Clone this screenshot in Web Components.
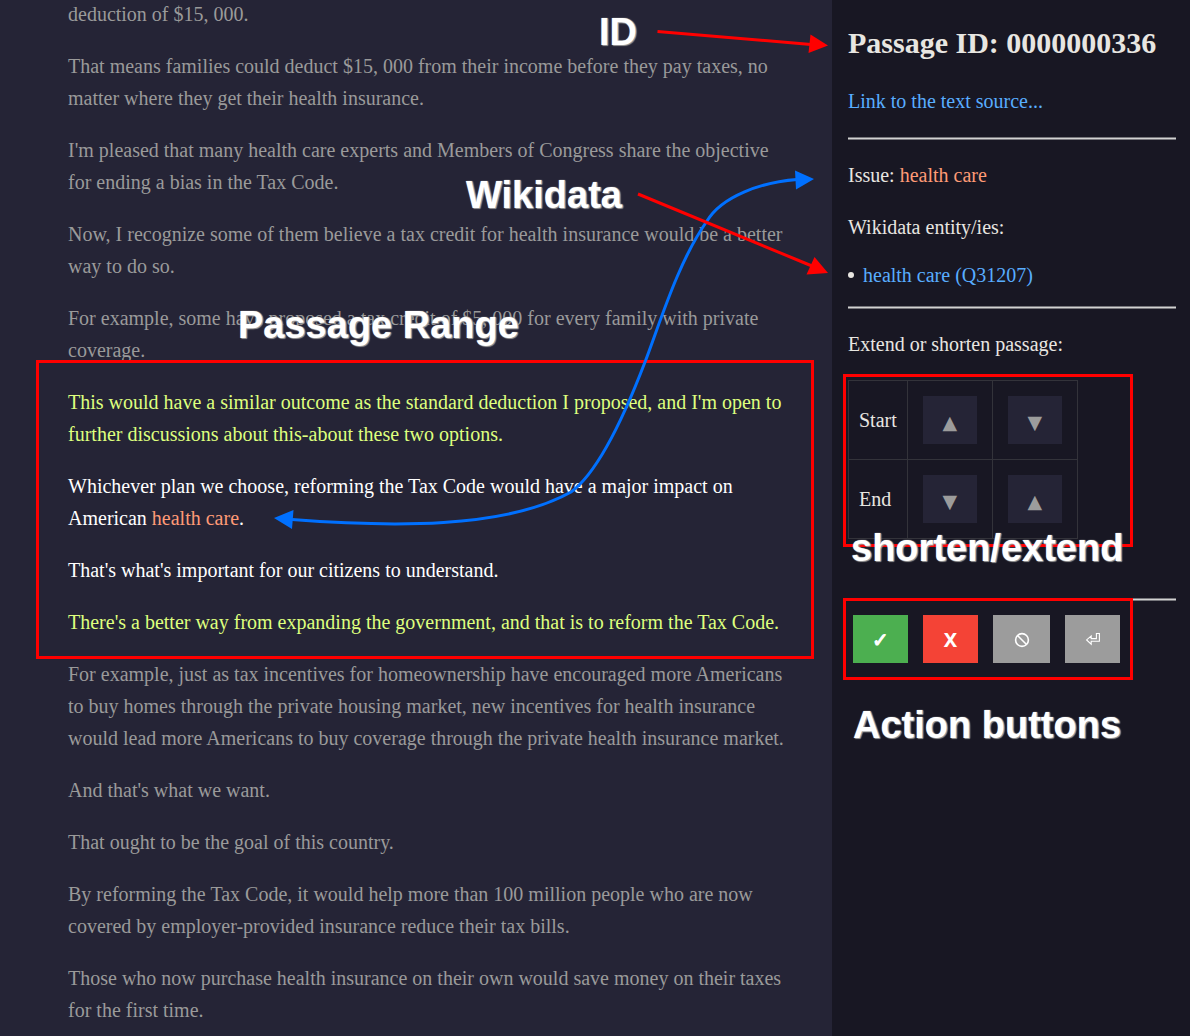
<!DOCTYPE html>
<html lang="en">
<head>
<meta charset="utf-8">
<meta name="viewport" content="width=device-width, initial-scale=1">
<title>Passage ID: 0000000336</title>
<style>
  body { margin: 0; background: #252436; }
</style>
</head>
<body>
<passage-app></passage-app>

<template id="passage-app">
  <style>
    :host { display: flex; position: relative; min-height: 100vh; overflow: hidden;
      font: 20px/32px "Liberation Serif", "Times New Roman", serif; color: #9a9a9a; background: #252436; }
    speech-text { flex: 1; min-width: 0; }
    side-panel { flex: 0 0 358px; }
    mark { background: none; color: #ff9b76; }
  </style>
  <speech-text>
    <speech-line>deduction of $15, 000.</speech-line>
    <speech-line>That means families could deduct $15, 000 from their income before they pay taxes, no matter where they get their health insurance.</speech-line>
    <speech-line>I'm pleased that many health care experts and Members of Congress share the objective for ending a bias in the Tax Code.</speech-line>
    <speech-line>Now, I recognize some of them believe a tax credit for health insurance would be a better way to do so.</speech-line>
    <speech-line>For example, some have proposed a tax credit of $5, 000 for every family with private coverage.</speech-line>
    <passage-range>
      <speech-line kind="context">This would have a similar outcome as the standard deduction I proposed, and I'm open to further discussions about this-about these two options.</speech-line>
      <speech-line kind="core">Whichever plan we choose, reforming the Tax Code would have a major impact on American <mark>health care</mark>.</speech-line>
      <speech-line kind="core">That's what's important for our citizens to understand.</speech-line>
      <speech-line kind="context">There's a better way from expanding the government, and that is to reform the Tax Code.</speech-line>
    </passage-range>
    <speech-line>For example, just as tax incentives for homeownership have encouraged more Americans to buy homes through the private housing market, new incentives for health insurance would lead more Americans to buy coverage through the private health insurance market.</speech-line>
    <speech-line>And that's what we want.</speech-line>
    <speech-line>That ought to be the goal of this country.</speech-line>
    <speech-line>By reforming the Tax Code, it would help more than 100 million people who are now covered by employer-provided insurance reduce their tax bills.</speech-line>
    <speech-line>Those who now purchase health insurance on their own would save money on their taxes for the first time.</speech-line>
  </speech-text>
  <side-panel></side-panel>
  <callout-layer></callout-layer>
</template>

<template id="speech-text">
  <style>
    :host { display: block; }
    main { display: flex; flex-direction: column; gap: 20px; margin-top: -2px; padding: 0 44px 10px 68px; }
  </style>
  <main><slot></slot></main>
</template>

<template id="speech-line">
  <style>
    :host { display: block; }
    :host([kind="context"]) { color: #deff7e; }
    :host([kind="core"]) { color: #fff; }
    p { margin: 0; }
  </style>
  <p><slot></slot></p>
</template>

<template id="passage-range">
  <style>
    :host { display: flex; flex-direction: column; gap: 20px; position: relative; }
    :host::before { content: ""; position: absolute; inset: -26px -26px -21px -32px; border: 3px solid #f00; }
  </style>
  <slot></slot>
</template>

<template id="side-panel">
  <style>
    :host { display: block; background: #181723; color: #e8e6e1; }
    aside { padding: 25px 14px 25px 16px; }
    h1 { font-size: 30px; line-height: 36px; margin: 0 0 24px; white-space: nowrap; }
    p { margin: 0 0 20px; }
    a { color: #58adff; text-decoration: none; }
    em { font-style: normal; color: #ff9b76; }
    hr { height: 1px; margin: 20px 0 19px; border: solid #77777c; border-width: 1px 0; background: #d2d2d2; }
    ul { margin: -4px 0 0; padding: 0; list-style: none; }
    li { display: flex; align-items: center; gap: 9px; }
    li::before { content: ""; width: 6px; height: 6px; border-radius: 50%; background: #e8e6e1; }
    ul + hr { margin-top: 15px; }
    .tools { margin-top: 59px; }
  </style>
  <aside>
    <h1>Passage ID: 0000000336</h1>
    <p><a href="#source">Link to the text source...</a></p>
    <hr>
    <p>Issue: <em>health care</em></p>
    <p>Wikidata entity/ies:</p>
    <ul><li><a href="#Q31207">health care (Q31207)</a></li></ul>
    <hr>
    <p>Extend or shorten passage:</p>
    <range-controls></range-controls>
    <hr class="tools">
    <action-bar></action-bar>
  </aside>
</template>

<template id="range-controls">
  <style>
    :host { display: block; position: relative; }
    :host::before { content: ""; position: absolute; left: -5px; top: -6px; width: 284px; height: 167px; border: 3px solid #f00; pointer-events: none; }
    table { border-collapse: collapse; }
    th, td { border: 1px solid #33333a; height: 78px; padding: 0 15px; }
    th { font-weight: normal; text-align: left; padding: 0 10px; }
    button { display: block; box-sizing: border-box; width: 54px; height: 48px; padding: 4px 0 0; border: 0; background: #252436; color: #9c9c9c;
      font: 19px/44px "DejaVu Sans", sans-serif; }
  </style>
  <table>
    <tr><th scope="row">Start</th><td><button aria-label="Extend start">▲</button></td><td><button aria-label="Shorten start">▼</button></td></tr>
    <tr><th scope="row">End</th><td><button aria-label="Shorten end">▼</button></td><td><button aria-label="Extend end">▲</button></td></tr>
  </table>
</template>

<template id="action-bar">
  <style>
    :host { display: flex; gap: 15px; position: relative; margin-top: -5px; padding-left: 5px; }
    :host::before { content: ""; position: absolute; left: -5px; top: -17px; width: 284px; height: 76px; border: 3px solid #f00; pointer-events: none; }
    button { display: flex; align-items: center; justify-content: center; width: 55px; height: 48px; padding: 2px 0 0; border: 0;
      color: #fff; background: #9c9c9c; font: bold 20px/46px "Noto Sans", "DejaVu Sans", sans-serif; }
    .accept { background: #4caf50; font-family: "DejaVu Sans", sans-serif; -webkit-text-stroke: 1px #fff; }
    .reject { background: #f44336; }
    .ignore { width: 57px; }
    svg { fill: none; stroke: #fff; }
  </style>
  <button class="accept" aria-label="Accept">✓</button>
  <button class="reject" aria-label="Reject">X</button>
  <button class="ignore" aria-label="Ignore"><svg width="16" height="16" viewBox="0 0 16 16" stroke-width="1.6"><circle cx="8" cy="8" r="6.4"/><path d="M3.500 3.500l9 9"/></svg></button>
  <button aria-label="Return"><svg width="16" height="16" viewBox="0 0 16 16" stroke-width="1.1"><path d="M11.400 1.500h3v7.700H6.200v3L1.600 7.900l4.600-4v2.700h5.200z"/></svg></button>
</template>

<template id="callout-layer">
  <style>
    :host { position: absolute; inset: 0; pointer-events: none; }
    svg { display: block; position: absolute; left: 0; top: 0; }
  </style>
  <svg width="1190" height="1036" viewBox="0 0 1190 1036" fill="none" stroke-width="3" aria-hidden="true">
    <path stroke="#0070ff" d="M292 519.500C390 527 505 529 571 492C600 471 627 409 645 362C660 323 678 262 707 221C722 196 762 182 797 179.500"/>
    <path fill="#0070ff" d="M274 518l19.500-8-1.500 19zM814 179l-19-8.500 1 19z"/>
    <path stroke="#f00" d="M657.500 31.500L811 44.500M638 194l174 72"/>
    <path fill="#f00" d="M828 45.500l-17.500-11-2 18.500zM828 273l-13.500-16-8 17.500z"/>
  </svg>
  <callout-label style="left:599px;top:10px">ID</callout-label>
  <callout-label style="left:466px;top:173px">Wikidata</callout-label>
  <callout-label style="left:238px;top:303px">Passage Range</callout-label>
  <callout-label style="left:851px;top:526px">shorten/extend</callout-label>
  <callout-label style="left:853px;top:703px">Action buttons</callout-label>
</template>

<template id="callout-label">
  <style>
    :host { position: absolute; white-space: nowrap; color: #fff; font: bold 38px/44px "Liberation Sans", Arial, sans-serif;
      text-shadow: 1px 1px 1px #999, 0 0 1px #aaa, 1px 0 1px #999; }
  </style>
  <slot></slot>
</template>

<script>
  const names = ['callout-label', 'callout-layer', 'action-bar', 'range-controls', 'side-panel',
    'passage-range', 'speech-line', 'speech-text', 'passage-app'];
  for (const name of names) {
    customElements.define(name, class extends HTMLElement {
      constructor() {
        super();
        this.attachShadow({ mode: 'open' })
          .append(document.getElementById(name).content.cloneNode(true));
      }
    });
  }
</script>
</body>
</html>
